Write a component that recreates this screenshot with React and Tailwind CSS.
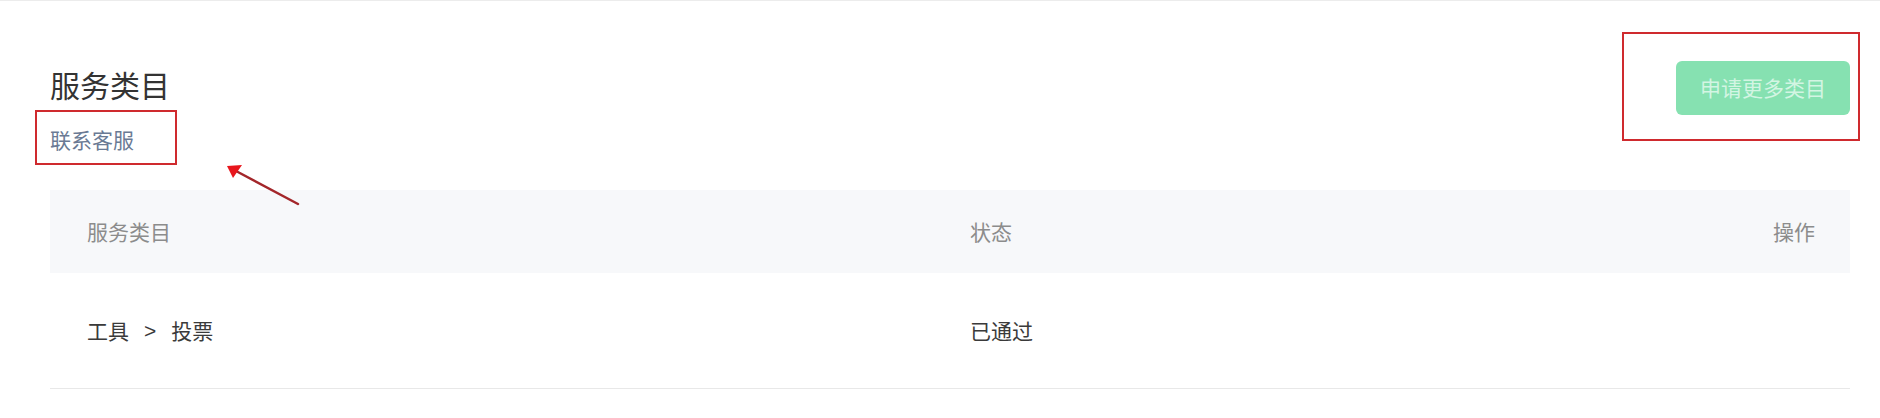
import React from 'react'

const font = { fontFamily: '"Noto Sans CJK SC", "Noto Sans", sans-serif' }

const rows = [{ id: 1, category: ['工具', '投票'], status: '已通过' }]

const App = () => {
    return (
        <div className="relative min-h-[418px] w-full bg-white border-t border-[#ececec]" style={font}>
            <div className="pl-[50px] pr-[30px] pt-[60px]">
                {/* Header */}
                <div className="flex items-start justify-between">
                    <div className="flex flex-col">
                        <h1 className="mt-[7px] text-[30px] leading-[33px] font-normal text-[#333]">服务类目</h1>
                        <div className="relative mt-[24px] self-start">
                            <a className="block text-[21px] leading-[28px] text-[#6a7a94] cursor-pointer">联系客服</a>
                            {/* annotation box */}
                            <span className="absolute left-[-15px] top-[-15px] w-[142px] h-[55px] border-2 border-[#cf2a2e] pointer-events-none"></span>
                        </div>
                    </div>

                    <div className="relative">
                        <button className="w-[174px] h-[54px] rounded-[6px] bg-[#86e1b1] text-[21px] text-[#d3f5e3] cursor-not-allowed">
                            申请更多类目
                        </button>
                        <span className="absolute left-[-54px] right-[-10px] top-[-29px] bottom-[-26px] border-2 border-[#cf2a2e] pointer-events-none"></span>
                    </div>
                </div>

                {/* Table */}
                <div className="mt-[37px]">
                    <div className="grid grid-cols-[920px_1fr_200px] items-center h-[83px] bg-[#f7f8fa] text-[21px] text-[#8c8c8c]">
                        <div className="pl-[37px]">服务类目</div>
                        <div>状态</div>
                        <div className="pr-[35px] text-right">操作</div>
                    </div>
                    {rows.map((row) => (
                        <div key={row.id} className="grid grid-cols-[920px_1fr_200px] items-center h-[116px] border-b border-[#e8e8e8] text-[21px] text-[#3a3a3a]">
                            <div className="pl-[37px] flex items-center gap-[15px]">
                                <span>{row.category[0]}</span>
                                <span style={{ fontFamily: '"Liberation Sans", sans-serif' }}>&gt;</span>
                                <span>{row.category[1]}</span>
                            </div>
                            <div>{row.status}</div>
                            <div className="pr-[35px] text-right"></div>
                        </div>
                    ))}
                </div>
            </div>

            {/* annotation arrow */}
            <svg className="absolute left-[220px] top-[158px] pointer-events-none" width="90" height="52" viewBox="0 0 90 52">
                <line x1="78" y1="45" x2="16" y2="12" stroke="#a3262a" strokeWidth="2.5" strokeLinecap="round" />
                <polygon points="7,7 22,6 13,19" fill="#e8161c" />
            </svg>
        </div>
    )
}

export default App
